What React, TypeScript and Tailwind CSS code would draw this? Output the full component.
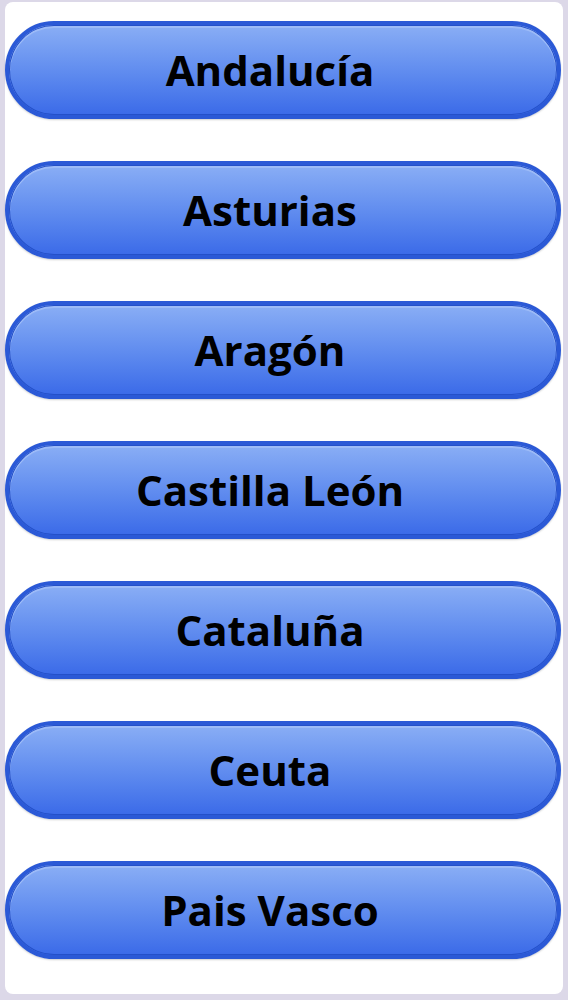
const REGIONS = ['Andalucía', 'Asturias', 'Aragón', 'Castilla León', 'Cataluña', 'Ceuta', 'Pais Vasco'];

export default function App() {
  return (
    <div className="min-h-screen w-[568px] bg-[#dcd8e8] px-[5px] pt-[2px] pb-[6px]">
      <div className="flex h-[992px] flex-col gap-[42px] rounded-lg bg-white pr-[2px] pt-[19px]">
        {REGIONS.map((r) => (
          <button
            key={r}
            className="flex h-[98px] w-full items-center justify-center rounded-full border-4 border-[#2b59d6] bg-gradient-to-b from-[#8aaef5] to-[#3b6ae8] pr-[26px] shadow-[inset_0_0_0_1px_#2450c8,inset_0_2px_0_1px_#9dbbf7,0_1px_2px_rgba(0,0,0,0.2)]"
          >
            <span className="whitespace-nowrap font-['Open_Sans',sans-serif] text-[42px] font-bold leading-none text-black">{r}</span>
          </button>
        ))}
      </div>
    </div>
  );
}
